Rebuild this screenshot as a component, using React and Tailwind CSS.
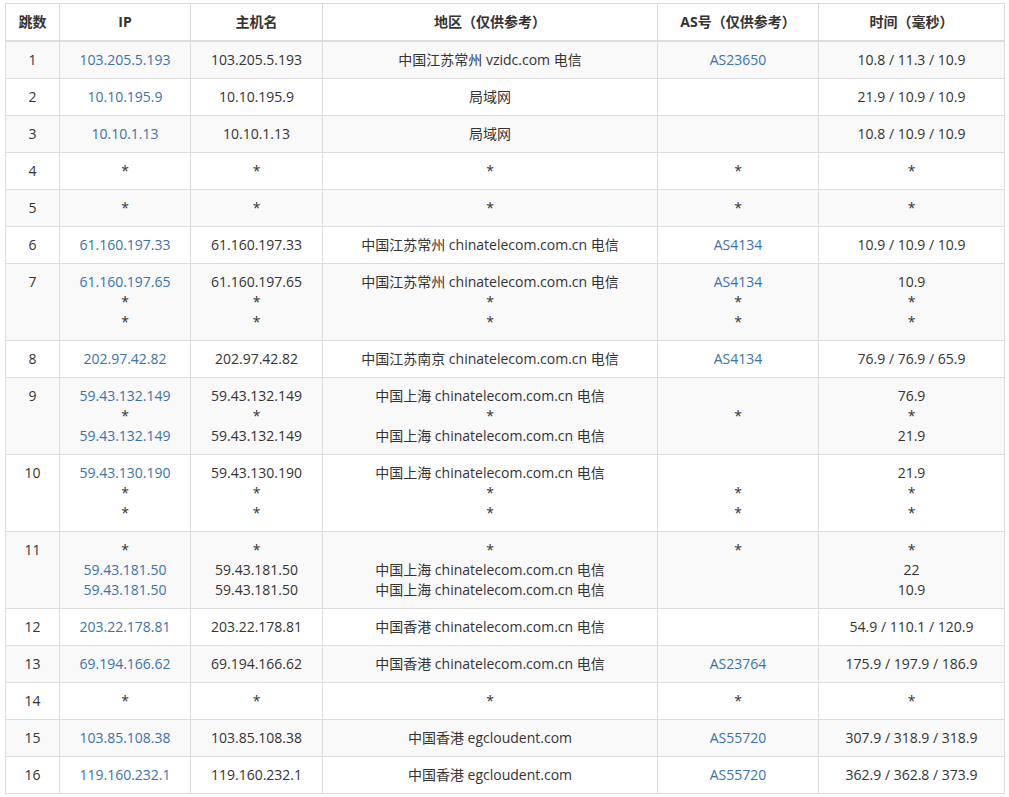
const rows = [
  ["1", ["103.205.5.193"], ["103.205.5.193"], ["中国江苏常州 vzidc.com 电信"], ["AS23650"], ["10.8 / 11.3 / 10.9"]],
  ["2", ["10.10.195.9"], ["10.10.195.9"], ["局域网"], [""], ["21.9 / 10.9 / 10.9"]],
  ["3", ["10.10.1.13"], ["10.10.1.13"], ["局域网"], [""], ["10.8 / 10.9 / 10.9"]],
  ["4", ["*"], ["*"], ["*"], ["*"], ["*"]],
  ["5", ["*"], ["*"], ["*"], ["*"], ["*"]],
  ["6", ["61.160.197.33"], ["61.160.197.33"], ["中国江苏常州 chinatelecom.com.cn 电信"], ["AS4134"], ["10.9 / 10.9 / 10.9"]],
  ["7", ["61.160.197.65", "*", "*"], ["61.160.197.65", "*", "*"], ["中国江苏常州 chinatelecom.com.cn 电信", "*", "*"], ["AS4134", "*", "*"], ["10.9", "*", "*"]],
  ["8", ["202.97.42.82"], ["202.97.42.82"], ["中国江苏南京 chinatelecom.com.cn 电信"], ["AS4134"], ["76.9 / 76.9 / 65.9"]],
  ["9", ["59.43.132.149", "*", "59.43.132.149"], ["59.43.132.149", "*", "59.43.132.149"], ["中国上海 chinatelecom.com.cn 电信", "*", "中国上海 chinatelecom.com.cn 电信"], ["", "*", ""], ["76.9", "*", "21.9"]],
  ["10", ["59.43.130.190", "*", "*"], ["59.43.130.190", "*", "*"], ["中国上海 chinatelecom.com.cn 电信", "*", "*"], ["", "*", "*"], ["21.9", "*", "*"]],
  ["11", ["*", "59.43.181.50", "59.43.181.50"], ["*", "59.43.181.50", "59.43.181.50"], ["*", "中国上海 chinatelecom.com.cn 电信", "中国上海 chinatelecom.com.cn 电信"], ["*", "", ""], ["*", "22", "10.9"]],
  ["12", ["203.22.178.81"], ["203.22.178.81"], ["中国香港 chinatelecom.com.cn 电信"], [""], ["54.9 / 110.1 / 120.9"]],
  ["13", ["69.194.166.62"], ["69.194.166.62"], ["中国香港 chinatelecom.com.cn 电信"], ["AS23764"], ["175.9 / 197.9 / 186.9"]],
  ["14", ["*"], ["*"], ["*"], ["*"], ["*"]],
  ["15", ["103.85.108.38"], ["103.85.108.38"], ["中国香港 egcloudent.com"], ["AS55720"], ["307.9 / 318.9 / 318.9"]],
  ["16", ["119.160.232.1"], ["119.160.232.1"], ["中国香港 egcloudent.com"], ["AS55720"], ["362.9 / 362.8 / 373.9"]],
];

function Lines({ items, link }) {
  return items.map((t, i) => (
    <div key={i} className={"h-5 " + (link && t !== "*" ? "text-[#3a72ad]" : "")}>{t}</div>
  ));
}

export default function App() {
  const td = "border border-[#dddddd] px-2 py-2 align-top text-center leading-5";
  return (
    <div className="bg-white w-[1009px] h-[797px] pt-[3px] pl-[5px]" style={{ fontFamily: '"Open Sans","Noto Sans CJK SC",sans-serif' }}>
      <table className="w-[999px] border-collapse text-[14px] text-[#333333] table-fixed">
        <colgroup>
          <col className="w-[54px]" /><col className="w-[131px]" /><col className="w-[132px]" /><col className="w-[335px]" /><col className="w-[161px]" /><col className="w-[186px]" />
        </colgroup>
        <thead>
          <tr className="h-[37px]">
            {["跳数", "IP", "主机名", "地区（仅供参考）", "AS号（仅供参考）", "时间（毫秒）"].map((h) => (
              <th key={h} className="border border-[#dddddd] border-b-2 px-2 py-2 font-bold text-center leading-5 align-bottom">{h}</th>
            ))}
          </tr>
        </thead>
        <tbody>
          {rows.map((r, i) => (
            <tr key={i} className={i % 2 === 0 ? "bg-[#f9f9f9]" : "bg-white"}>
              <td className={td}>{r[0]}</td>
              <td className={td}><Lines items={r[1]} link /></td>
              <td className={td}><Lines items={r[2]} /></td>
              <td className={td}><Lines items={r[3]} /></td>
              <td className={td}><Lines items={r[4]} link /></td>
              <td className={td}><Lines items={r[5]} /></td>
            </tr>
          ))}
        </tbody>
      </table>
    </div>
  );
}
